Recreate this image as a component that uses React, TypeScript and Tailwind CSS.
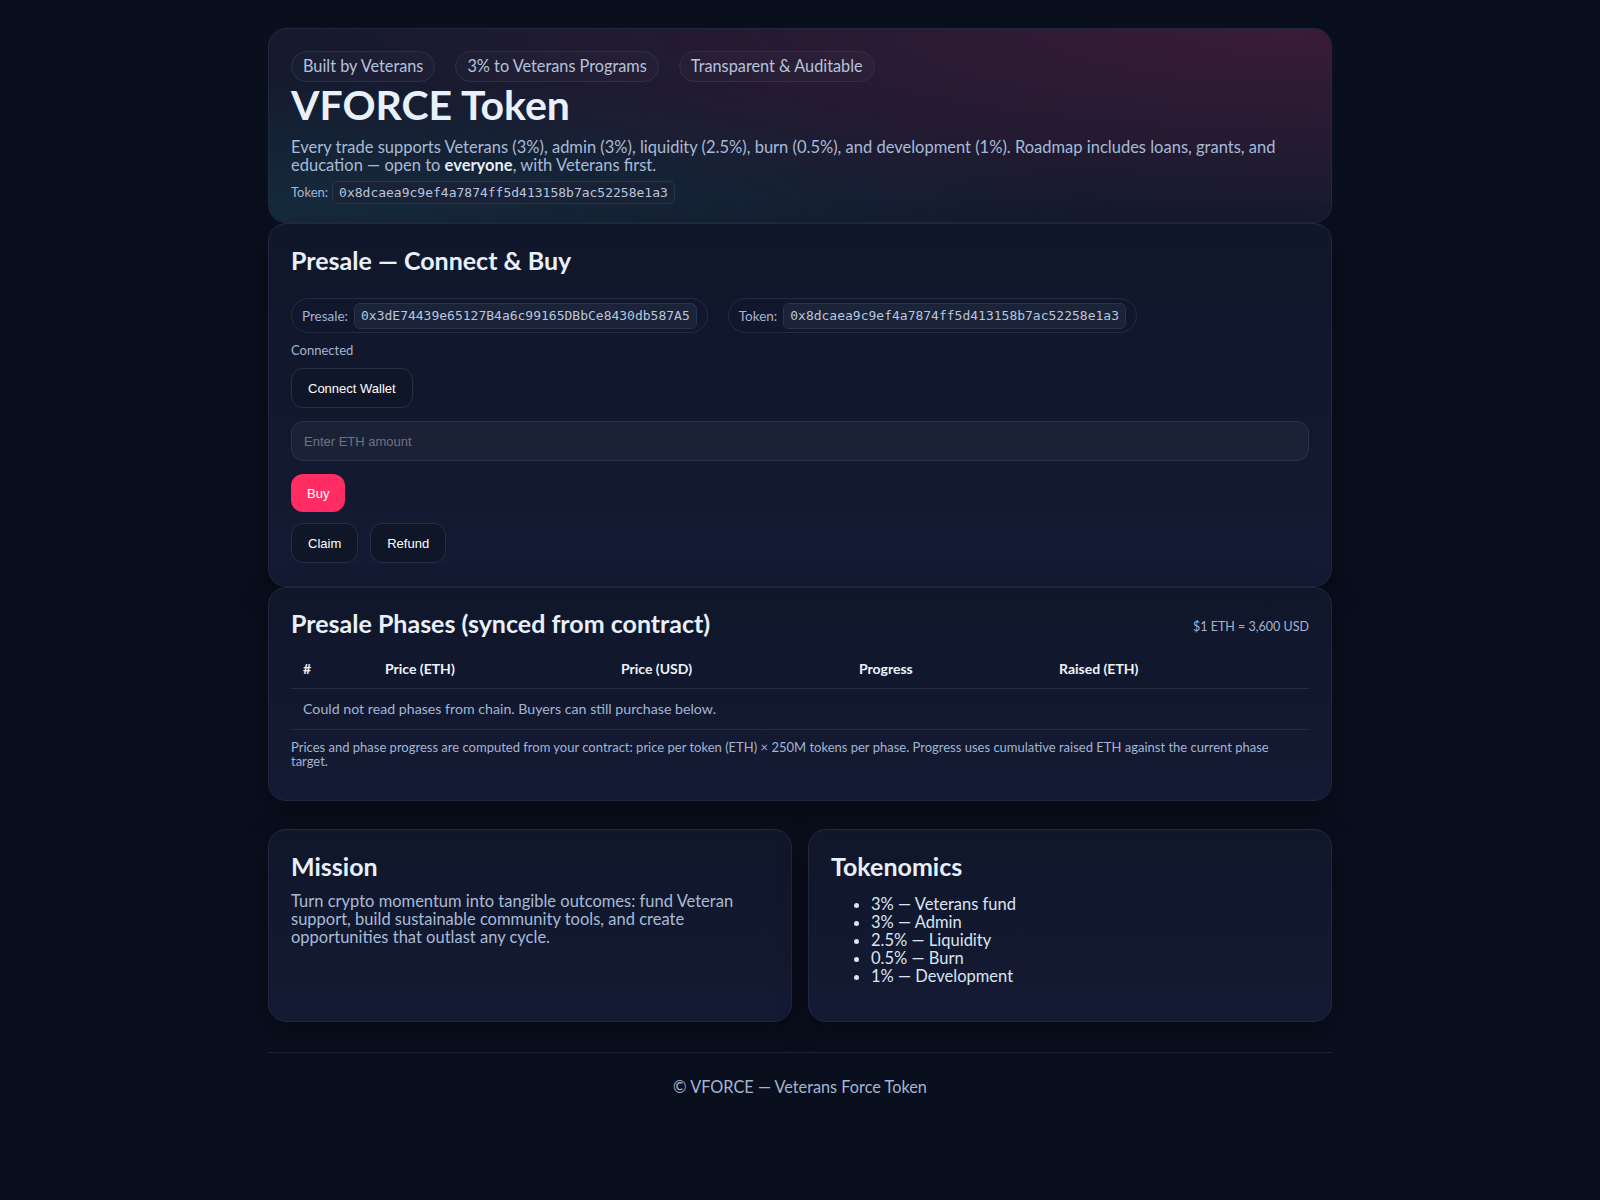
import React from "react";

const sans = "font-['Lato','Noto_Sans',sans-serif]";
const mono = "font-['DejaVu_Sans_Mono','Liberation_Mono',monospace]";
const btnFont = "font-['Liberation_Sans',Arial,sans-serif]";

const TOKEN = "0x8dcaea9c9ef4a7874ff5d413158b7ac52258e1a3";
const PRESALE = "0x3dE74439e65127B4a6c99165DBbCe8430db587A5";

function Pill({ children }: { children: React.ReactNode }) {
  return (
    <span className="inline-flex h-[31px] items-center rounded-full border border-[#29324a] bg-white/[0.02] px-[11px] text-[16.3px] text-[#b4c3dc]">
      {children}
    </span>
  );
}

function AddressPill({ label, value }: { label: string; value: string }) {
  return (
    <div className="inline-flex h-[35px] items-center gap-[6px] rounded-full border border-[#232c44] px-[10px]">
      <span className="text-[13.5px] text-[#a3b5d3]">{label}</span>
      <code className={`${mono} rounded-md border border-[#2a3350] bg-[#1b2338] px-[6px] py-[2px] text-[13px] text-[#b8c6de]`}>
        {value}
      </code>
    </div>
  );
}

function GhostButton({ children }: { children: React.ReactNode }) {
  return (
    <button
      type="button"
      className={`${btnFont} h-[40px] rounded-xl border border-[#262f45] bg-[#0f1628] px-4 text-[13px] text-white`}
    >
      {children}
    </button>
  );
}

const cardBase =
  "rounded-[18px] border border-[#1f2840] bg-[linear-gradient(180deg,#10172a,#131a33)] px-[22px] shadow-[0_10px_30px_rgba(0,0,0,0.35)]";

const h2 = "text-[25px] font-bold leading-[28px] text-[#e8f0fb]";

export default function App() {
  const tokenomics = ["3% — Veterans fund", "3% — Admin", "2.5% — Liquidity", "0.5% — Burn", "1% — Development"];

  return (
    <div className={`${sans} min-h-screen bg-[#0a0f1e] text-[#e6eef9]`}>
      <div className="mx-auto w-[1064px] pt-[28px] pb-10">
        {/* hero */}
        <section className="rounded-[18px] border border-[#1f2840] bg-[#151a2e] bg-[radial-gradient(ellipse_at_top_right,rgba(120,30,70,0.38),transparent_70%),radial-gradient(ellipse_at_bottom_left,rgba(20,90,100,0.28),transparent_55%)] px-[22px] pt-[22px] pb-[18px]">
          <div className="flex gap-5">
            <Pill>Built by Veterans</Pill>
            <Pill>3% to Veterans Programs</Pill>
            <Pill>Transparent &amp; Auditable</Pill>
          </div>
          <h1 className="text-[41px] font-bold leading-[46px] text-[#e8f0fb]">VFORCE Token</h1>
          <p className="mt-[10px] text-[16.5px] leading-[18.4px] text-[#a8bbd8]">
            Every trade supports Veterans (3%), admin (3%), liquidity (2.5%), burn (0.5%), and development (1%).
            Roadmap includes loans, grants, and education — open to <b className="text-[#e6eef9]">everyone</b>, with
            Veterans first.
          </p>
          <div className="mt-[6px] flex items-center gap-[4px] text-[13px] text-[#a3b5d3]">
            <span>Token:</span>
            <code className={`${mono} rounded-md border border-[#2a3350] bg-[#1a2236]/80 px-[6px] py-[1px] text-[13px] text-[#b8c6de]`}>
              {TOKEN}
            </code>
          </div>
        </section>

        {/* presale */}
        <section className={`${cardBase} pt-[22px] pb-[23px]`}>
          <h2 className={h2}>Presale — Connect &amp; Buy</h2>
          <div className="mt-[24px] flex gap-5">
            <AddressPill label="Presale:" value={PRESALE} />
            <AddressPill label="Token:" value={TOKEN} />
          </div>
          <div className="mt-[10px] text-[13px] leading-[15px] text-[#a3b5d3]">Connected</div>
          <div className="mt-[10px]">
            <GhostButton>Connect Wallet</GhostButton>
          </div>
          <input
            placeholder="Enter ETH amount"
            className={`${btnFont} mt-[13px] block h-[40px] w-full rounded-xl border border-[#29324a] bg-[#1b2236] px-3 text-[13px] text-white outline-none placeholder:text-[#6b7384]`}
          />
          <button
            type="button"
            className={`${btnFont} mt-[13px] h-[38px] rounded-xl bg-[#ff2d63] px-4 text-[13px] text-white`}
          >
            Buy
          </button>
          <div className="mt-[11px] flex gap-3">
            <GhostButton>Claim</GhostButton>
            <GhostButton>Refund</GhostButton>
          </div>
        </section>

        {/* phases */}
        <section className={`${cardBase} pt-[21px] pb-[32px]`}>
          <div className="flex items-end justify-between">
            <h2 className={h2}>Presale Phases (synced from contract)</h2>
            <span className="pb-[1px] text-[12.5px] text-[#a3b5d3]">$1 ETH = 3,600 USD</span>
          </div>
          <table className="mt-[11px] w-full table-fixed border-collapse text-left">
            <colgroup>
              <col className="w-[82px]" />
              <col className="w-[236px]" />
              <col className="w-[238px]" />
              <col className="w-[200px]" />
              <col />
            </colgroup>
            <thead>
              <tr className="border-b border-[#242d44]">
                {["#", "Price (ETH)", "Price (USD)", "Progress", "Raised (ETH)"].map((h) => (
                  <th key={h} className="h-[40px] px-3 text-[14px] font-bold text-[#eef3fb]">
                    {h}
                  </th>
                ))}
              </tr>
            </thead>
            <tbody>
              <tr className="border-b border-[#242d44]">
                <td colSpan={5} className="h-[41px] px-3 text-[14.2px] text-[#a3b5d3]">
                  Could not read phases from chain. Buyers can still purchase below.
                </td>
              </tr>
            </tbody>
          </table>
          <p className="mt-[10px] pr-[40px] text-[13px] leading-[14px] text-[#a3b5d3]">
            Prices and phase progress are computed from your contract: price per token (ETH) × 250M tokens per phase.
            Progress uses cumulative raised ETH against the current phase target.
          </p>
        </section>

        {/* mission + tokenomics */}
        <div className="mt-[28px] grid grid-cols-2 gap-4">
          <section className={`${cardBase} py-[22px]`}>
            <h2 className={h2}>Mission</h2>
            <p className="mt-[12px] text-[16.5px] leading-[18px] text-[#a8bbd8]">
              Turn crypto momentum into tangible outcomes: fund Veteran support, build sustainable community tools, and
              create opportunities that outlast any cycle.
            </p>
          </section>
          <section className={`${cardBase} py-[22px]`}>
            <h2 className={h2}>Tokenomics</h2>
            <ul className="mt-[15px] mb-[14px] list-disc pl-10 text-[16.5px] leading-[18px] text-[#dbe4f1]">
              {tokenomics.map((t) => (
                <li key={t}>{t}</li>
              ))}
            </ul>
          </section>
        </div>

        <footer className="mt-[30px] border-t border-[#1c2438] pt-[25px] text-center text-[16.3px] leading-[18px] text-[#a3b5d3]">
          © VFORCE — Veterans Force Token
        </footer>
      </div>
    </div>
  );
}
